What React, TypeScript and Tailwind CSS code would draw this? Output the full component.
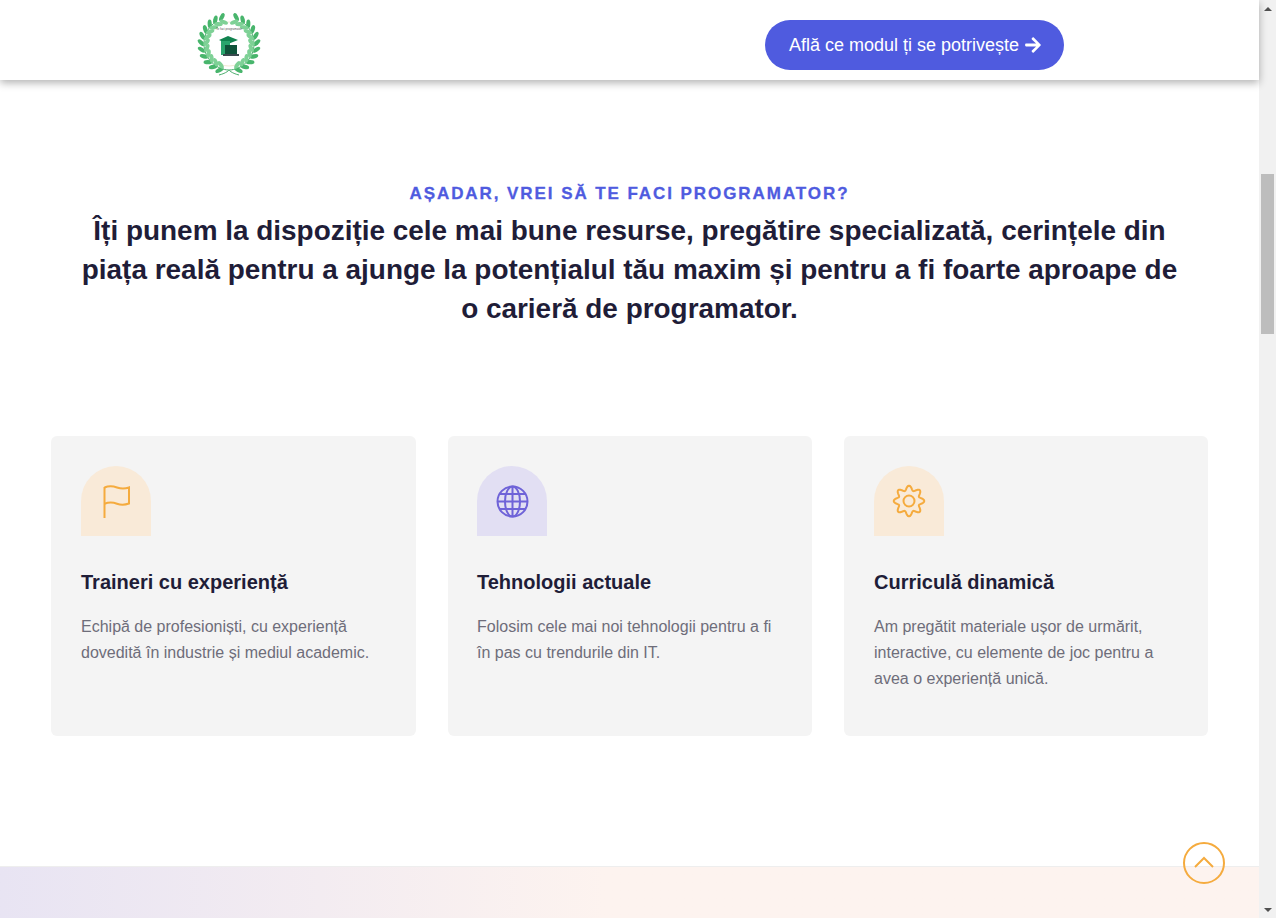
import React from 'react'
import { FaArrowRight } from 'react-icons/fa'

const cards = [
  {
    title: 'Traineri cu experiență',
    text: ['Echipă de profesioniști, cu experiență', 'dovedită în industrie și mediul academic.'],
    tint: 'bg-[#f9ead8]',
    pad: 'pl-[30px]',
    icon: 'flag',
  },
  {
    title: 'Tehnologii actuale',
    text: ['Folosim cele mai noi tehnologii pentru a fi', 'în pas cu trendurile din IT.'],
    tint: 'bg-[#e2dff3]',
    pad: 'pl-[29px]',
    icon: 'globe',
  },
  {
    title: 'Curriculă dinamică',
    text: ['Am pregătit materiale ușor de urmărit,', 'interactive, cu elemente de joc pentru a', 'avea o experiență unică.'],
    tint: 'bg-[#f9ead8]',
    pad: 'pl-[30px]',
    icon: 'gear',
  },
]

const FlagIcon = () => (
  <svg width="28" height="33" viewBox="0 0 28 33" fill="none" stroke="#f5ab3e" strokeWidth="2" className="ml-[2px]">
    <path d="M1.500 33V2" />
    <path d="M1.500 2.500c4-1.600 8-1.600 12.500 0s8 1.400 12 0v16c-4 1.400-8 1.600-12 .2s-8-1.600-12.500 0" />
  </svg>
)

const GlobeIcon = () => (
  <svg width="33" height="33" viewBox="0 0 33 33" fill="none" stroke="#6f63d8" strokeWidth="2">
    <circle cx="16.500" cy="16.500" r="15" />
    <ellipse cx="16.500" cy="16.500" rx="7.500" ry="15" />
    <path d="M16.500 1.500v30M1.500 16.500h30M4 9h25M4 24h25" />
  </svg>
)

const GearIcon = () => {
  // eight lobed outline
  const points: string[] = []
  for (let i = 0; i < 96; i++) {
    const a = (i / 96) * Math.PI * 2
    const r = 13 + 2.3 * Math.cos(a * 8)
    points.push(`${(17 + r * Math.sin(a)).toFixed(2)},${(17 - r * Math.cos(a)).toFixed(2)}`)
  }
  return (
    <svg width="34" height="34" viewBox="0 0 34 34" fill="none" stroke="#f5ab3e" strokeWidth="2">
      <polygon points={points.join(' ')} strokeLinejoin="round" />
      <circle cx="17" cy="17" r="5.500" />
    </svg>
  )
}

const leaves = [0, 1, 2, 3, 4, 5, 6, 7, 8, 9, 10]

const Branch = () => (
  <g>
    <path d="M22 62C30 60 32 57 32 57c12 0 25-11 25-26 0-10-5-18-12-22" fill="none" stroke="#4cae6e" strokeWidth="1" />
    {leaves.map((i) => {
      const phi = ((14 + i * 14.5) * Math.PI) / 180
      const x = 32 + 25 * Math.sin(phi)
      const y = 31 + 25 * Math.cos(phi)
      const tangent = (Math.atan2(-Math.sin(phi), Math.cos(phi)) * 180) / Math.PI
      return (
        <g key={i} transform={`translate(${x.toFixed(2)} ${y.toFixed(2)})`}>
          <ellipse cx="4" cy="0" rx="4.400" ry="2.100" fill="#48b56c" transform={`rotate(${tangent + 42})`} />
          <ellipse cx="4" cy="0" rx="4.400" ry="2.100" fill="#7ed196" transform={`rotate(${tangent - 42})`} />
        </g>
      )
    })}
  </g>
)

const Logo = () => (
  <svg width="64" height="64" viewBox="0 0 64 64" className="shrink-0">
    <circle cx="32" cy="31" r="22" fill="none" stroke="#eadfc2" strokeWidth="0.7" />
    <Branch />
    <g transform="translate(64 0) scale(-1 1)">
      <Branch />
    </g>
    <text x="32" y="17" textAnchor="middle" fontSize="3" fill="#555555">
      Te faci programator
    </text>
    <path d="M22 27l9-4 10 4-10 4z" fill="#11834f" />
    <path d="M24 28h9v14h-9z" fill="#2aa56d" />
    <rect x="28" y="32" width="12" height="9" fill="#10533a" />
    <rect x="26" y="41" width="16" height="2" fill="#3b4a4f" />
  </svg>
)

export default function App() {
  return (
    <div className="flex h-[918px] overflow-hidden bg-white font-['Liberation_Sans',Arial,sans-serif]">
      <div className="flex min-w-0 flex-1 flex-col">
        <header className="z-10 flex h-20 shrink-0 items-center justify-between bg-white pt-2.5 pr-[195px] pl-[197px] shadow-[0_3px_8px_rgba(0,0,0,0.3)]">
          <Logo />
          <button
            type="button"
            className="flex h-[50px] w-[299px] items-center gap-[5px] rounded-full bg-[#4f5bdf] pl-6 text-lg whitespace-nowrap text-white"
          >
            Află ce modul ți se potrivește
            <FaArrowRight size={18} />
          </button>
        </header>

        <main className="flex flex-1 flex-col items-center pt-[103px]">
          <p className="text-[17px] leading-[22px] font-bold tracking-[1.93px] text-[#4f5bdf] [-webkit-text-stroke:0.3px_#4f5bdf]">AȘADAR, VREI SĂ TE FACI PROGRAMATOR?</p>
          <h2 className="mt-1.5 w-[1110px] text-center text-[27.93px] leading-[39px] font-bold text-[#1f1d38]">
            Îți punem la dispoziție cele mai bune resurse, pregătire specializată, cerințele din piața reală pentru a ajunge la potențialul tău maxim și pentru a fi foarte aproape de o carieră de programator.
          </h2>

          <div className="mt-[108px] grid w-[1157px] grid-cols-[365px_364px_364px] gap-8">
            {cards.map((card) => (
              <div key={card.title} className={`h-[300px] rounded-md bg-[#f4f4f4] pt-[30px] ${card.pad}`}>
                <div className={`flex h-[70px] w-[70px] items-center justify-center rounded-t-[35px] ${card.tint}`}>
                  {card.icon === 'flag' && <FlagIcon />}
                  {card.icon === 'globe' && <GlobeIcon />}
                  {card.icon === 'gear' && <GearIcon />}
                </div>
                <h3 className="mt-[33px] text-xl leading-[26px] font-bold text-[#1f1d38]">{card.title}</h3>
                <p className="mt-[19px] text-base leading-[26px] text-[#6e6d7a]">
                  {card.text.map((line) => (
                    <span key={line} className="block whitespace-nowrap">
                      {line}
                    </span>
                  ))}
                </p>
              </div>
            ))}
          </div>
        </main>

        <div className="h-[52px] shrink-0 border-t border-[#eeeeee] bg-gradient-to-r from-[#e8e4f3] via-[#fdf3ef] via-[48%] to-[#fdf3ef]" />
      </div>

      <div className="flex w-[17px] shrink-0 flex-col bg-[#f1f1f1]">
        <div className="flex h-[17px] items-center justify-center">
          <div className="h-0 w-0 border-x-4 border-b-4 border-x-transparent border-b-[#505050]" />
        </div>
        <div className="mt-[157px] ml-0.5 h-[160px] w-[13px] bg-[#bdbdbd]" />
        <div className="flex-1" />
        <div className="flex h-[17px] items-center justify-center">
          <div className="h-0 w-0 border-x-4 border-t-4 border-x-transparent border-t-[#505050]" />
        </div>
      </div>
      <div className="w-0.5 shrink-0 bg-white" />

      <button
        type="button"
        className="absolute top-[842px] left-[1183px] flex h-[42px] w-[42px] items-center justify-center rounded-full border-2 border-[#f5ab3e]"
      >
        <svg width="20" height="12" viewBox="0 0 20 12" fill="none" stroke="#f5ab3e" strokeWidth="2" className="-mt-0.5">
          <path d="M1 11l9-9 9 9" />
        </svg>
      </button>
    </div>
  )
}
